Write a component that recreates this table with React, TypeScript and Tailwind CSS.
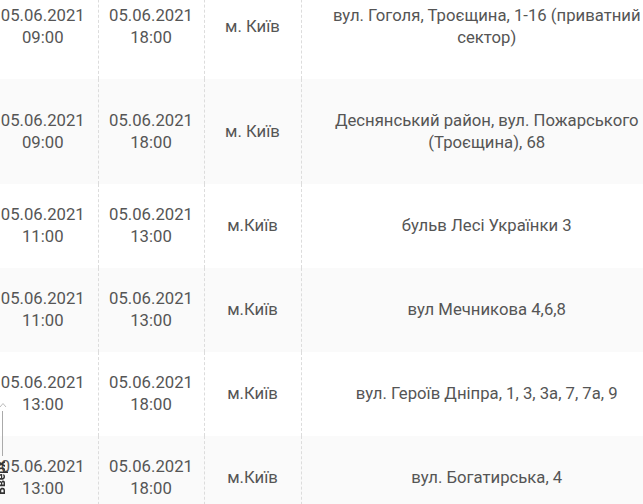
const rows = [
  { from: ["05.06.2021", "09:00"], to: ["05.06.2021", "18:00"], city: "м. Київ", addr: "вул. Гоголя, Троєщина, 1-16 (приватний сектор)", tall: true },
  { from: ["05.06.2021", "09:00"], to: ["05.06.2021", "18:00"], city: "м. Київ", addr: "Деснянський район, вул. Пожарського (Троєщина), 68", tall: true },
  { from: ["05.06.2021", "11:00"], to: ["05.06.2021", "13:00"], city: "м.Київ", addr: "бульв Лесі Українки 3", tall: false },
  { from: ["05.06.2021", "11:00"], to: ["05.06.2021", "13:00"], city: "м.Київ", addr: "вул Мечникова 4,6,8", tall: false },
  { from: ["05.06.2021", "13:00"], to: ["05.06.2021", "18:00"], city: "м.Київ", addr: "вул. Героїв Дніпра, 1, 3, 3а, 7, 7а, 9", tall: false },
  { from: ["05.06.2021", "13:00"], to: ["05.06.2021", "18:00"], city: "м.Київ", addr: "вул. Богатирська, 4", tall: false },
];

function ScrollTop() {
  return (
    <div className="fixed left-0 top-[401px] flex flex-col items-start">
      <svg width="8" height="8" viewBox="0 0 8 8" className="ml-[-1px]">
        <path d="M1 6 L4 2.5 L7 6" fill="none" stroke="#bbb" strokeWidth="1" />
      </svg>
      <div className="ml-[2px] mt-[2px] h-[45px] w-px bg-[#aaa]" />
      <div className="ml-[-6px] mt-[5px] text-[12px] font-bold leading-[14px] text-[#333] [writing-mode:vertical-rl] rotate-180">
        Вверх
      </div>
    </div>
  );
}

export default function App() {
  return (
    <div className="relative h-[504px] w-[643px] overflow-hidden bg-white font-['Roboto',sans-serif] text-[16.7px] leading-[22px] text-[#555]">
      <table className="ml-[-12px] mt-[-26px] w-[684px] table-fixed border-collapse">
        <colgroup>
          <col className="w-[110px]" />
          <col className="w-[106px]" />
          <col className="w-[97px]" />
          <col className="w-[371px]" />
        </colgroup>
        <tbody>
          {rows.map((r, i) => (
            <tr key={i} className={`${i % 2 === 1 ? "bg-[#fafafa]" : "bg-white"} ${r.tall ? "h-[105px]" : "h-[84px]"}`}>
              <td className="border-r border-dashed border-[#dcdcdc] px-1 text-center align-middle">
                {r.from[0]}
                <br />
                {r.from[1]}
              </td>
              <td className="border-r border-dashed border-[#dcdcdc] px-1 text-center align-middle">
                {r.to[0]}
                <br />
                {r.to[1]}
              </td>
              <td className="border-r border-dashed border-[#dcdcdc] px-1 text-center align-middle">{r.city}</td>
              <td className="px-[15px] text-center align-middle">{r.addr}</td>
            </tr>
          ))}
        </tbody>
      </table>
      <ScrollTop />
    </div>
  );
}
